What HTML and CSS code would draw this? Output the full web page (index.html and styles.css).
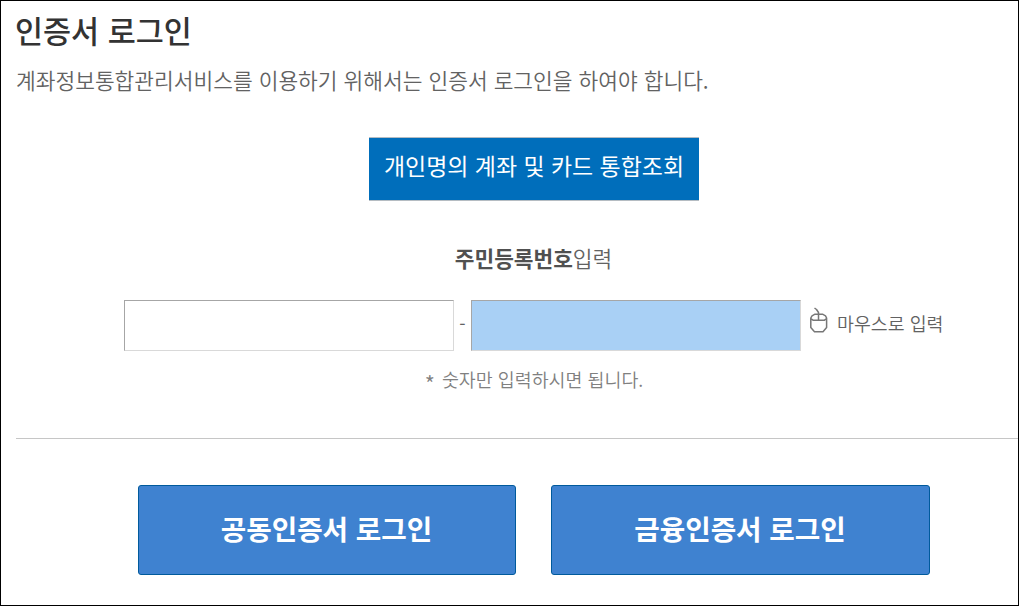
FILE: index.html
```html
<!DOCTYPE html>
<html lang="ko">
<head>
  <meta charset="UTF-8">
  <meta name="viewport" content="width=device-width, initial-scale=1.0">
  <title>인증서 로그인</title>
  <link rel="stylesheet" href="styles.css">
</head>
<body>
  <div class="container">
    <h1 class="title">인증서 로그인</h1>
    <p class="desc">계좌정보통합관리서비스를 이용하기 위해서는 인증서 로그인을 하여야 합니다.</p>

    <form class="login-form">
      <div class="service">개인명의 계좌 및 카드 통합조회</div>
      <label class="label" for="jumin1"><strong>주민등록번호</strong>입력</label>
      <div class="jumin">
        <input type="text" id="jumin1" class="field" maxlength="6">
        <span class="dash">-</span>
        <input type="password" id="jumin2" class="field field-secure" maxlength="7">
        <svg class="mouse-icon" width="20" height="28" viewBox="0 0 20 28">
          <path d="M5.5 1L7.5 2.5L9.5 5.5V13M1.8 11.5L4 13.2H15.5L17.6 11.5M6 7.2H13.5L16.5 8.8L17.6 11V20.5L14 24.8H5.5L1.8 20.5V11L3 8.8Z"/>
        </svg>
        <span class="mouse-text">마우스로 입력</span>
      </div>
      <p class="note"><span class="star">*</span> 숫자만 입력하시면 됩니다.</p>
    </form>

    <div class="buttons">
      <button type="button" class="btn">공동인증서 로그인</button>
      <button type="button" class="btn">금융인증서 로그인</button>
    </div>
  </div>
</body>
</html>
```

FILE: styles.css
```css
* {
  box-sizing: border-box;
}
body {
  margin: 0;
  background: #fff;
  font-family: "Noto Sans CJK KR", sans-serif;
  color: #626262;
}
.container {
  width: 1019px;
  height: 606px;
  padding: 9px 0 0 15px;
  border: 1px solid #000;
  overflow: hidden;
  white-space: nowrap;
}
.title {
  margin: 0 0 0 -1px;
  font-size: 30.5px;
  font-weight: 500;
  line-height: 40px;
  color: #333;
}
.desc {
  margin: 15px 0 0;
  font-size: 21.45px;
  font-weight: 350;
  line-height: 30px;
}
.login-form {
  display: flex;
  flex-direction: column;
  align-items: center;
  height: 344px;
  padding-top: 42px;
  border-bottom: 1px solid #c6c6c6;
}
.service {
  width: 330px;
  height: 64px;
  margin-left: 34px;
  border-top: 1px solid #b5bcc2;
  border-bottom: 1px solid #b5bcc2;
  background: #006ebb;
  color: #fff;
  font-size: 22.95px;
  line-height: 55px;
  text-align: center;
}
.label {
  margin: 42px 0 0 33px;
  font-size: 21.4px;
  font-weight: 350;
  line-height: 30px;
}
.label strong {
  font-weight: 700;
  color: #505050;
}
.jumin {
  display: flex;
  align-items: center;
  align-self: flex-start;
  margin: 27px 0 0 108px;
}
.field {
  width: 330px;
  height: 51px;
  padding: 0 10px;
  border: 1px solid;
  border-color: #a6a6a6 #d9d9d9 #d9d9d9 #a6a6a6;
  background: #fff;
  font-size: 20px;
}
.field-secure {
  background: #a9d0f5;
}
.dash {
  width: 17px;
  margin-bottom: 6px;
  font-size: 18px;
  line-height: 24px;
  text-align: center;
}
.mouse-icon {
  margin: 0 0 9px 8px;
  fill: none;
  stroke: #777;
  stroke-width: 1.5;
  stroke-linejoin: round;
}
.mouse-text {
  margin: 0 0 5px 8px;
  font-size: 18.35px;
  font-weight: 350;
}
.note {
  margin: 14px 0 0 34px;
  font-size: 18.4px;
  font-weight: 350;
  line-height: 28px;
  color: #808080;
}
.star {
  display: inline-block;
  margin-right: 2px;
  font-size: 22px;
  line-height: 20px;
  transform: translateY(6px);
}
.buttons {
  display: flex;
  gap: 35px;
  padding: 46px 0 0 122px;
}
.btn {
  width: 378px;
  height: 90px;
  padding: 0 1px 5px 0;
  border: 1px solid #005a9c;
  border-radius: 3px;
  background: #3f82d0;
  color: #fff;
  font-family: inherit;
  font-size: 27.7px;
  font-weight: 700;
}
.btn + .btn {
  width: 379px;
}
```
